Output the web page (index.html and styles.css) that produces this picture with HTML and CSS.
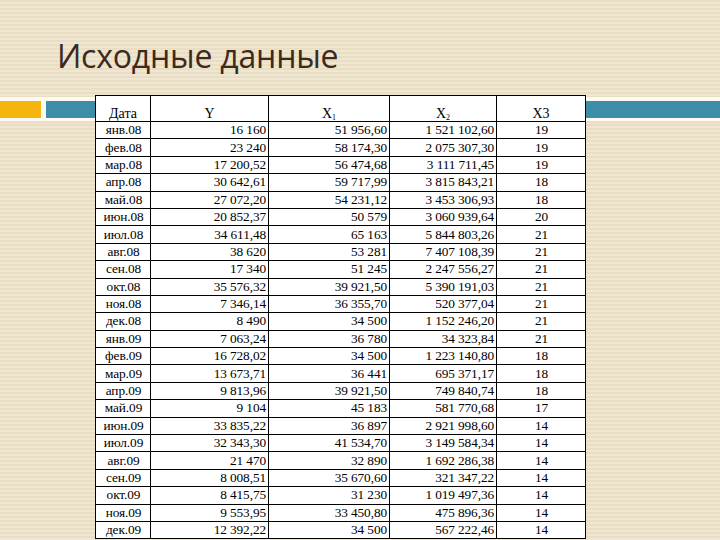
FILE: index.html
```html
<!DOCTYPE html>
<html lang="ru">
<head>
<meta charset="utf-8">
<title>Исходные данные</title>
<link rel="stylesheet" href="styles.css">
</head>
<body>
<header class="head">
  <h1 class="title">Исходные данные</h1>
</header>
<section class="stage">
  <table class="data">
    <colgroup>
      <col class="c-date"><col class="c-y"><col class="c-x1"><col class="c-x2"><col class="c-x3">
    </colgroup>
    <thead>
      <tr><th>Дата</th><th>Y</th><th>X<sub>1</sub></th><th>X<sub>2</sub></th><th>X3</th></tr>
    </thead>
    <tbody>
      <tr><td>янв.08</td><td>16 160</td><td>51 956,60</td><td>1 521 102,60</td><td>19</td></tr>
      <tr><td>фев.08</td><td>23 240</td><td>58 174,30</td><td>2 075 307,30</td><td>19</td></tr>
      <tr><td>мар.08</td><td>17 200,52</td><td>56 474,68</td><td>3 111 711,45</td><td>19</td></tr>
      <tr><td>апр.08</td><td>30 642,61</td><td>59 717,99</td><td>3 815 843,21</td><td>18</td></tr>
      <tr><td>май.08</td><td>27 072,20</td><td>54 231,12</td><td>3 453 306,93</td><td>18</td></tr>
      <tr><td>июн.08</td><td>20 852,37</td><td>50 579</td><td>3 060 939,64</td><td>20</td></tr>
      <tr><td>июл.08</td><td>34 611,48</td><td>65 163</td><td>5 844 803,26</td><td>21</td></tr>
      <tr><td>авг.08</td><td>38 620</td><td>53 281</td><td>7 407 108,39</td><td>21</td></tr>
      <tr><td>сен.08</td><td>17 340</td><td>51 245</td><td>2 247 556,27</td><td>21</td></tr>
      <tr><td>окт.08</td><td>35 576,32</td><td>39 921,50</td><td>5 390 191,03</td><td>21</td></tr>
      <tr><td>ноя.08</td><td>7 346,14</td><td>36 355,70</td><td>520 377,04</td><td>21</td></tr>
      <tr><td>дек.08</td><td>8 490</td><td>34 500</td><td>1 152 246,20</td><td>21</td></tr>
      <tr><td>янв.09</td><td>7 063,24</td><td>36 780</td><td>34 323,84</td><td>21</td></tr>
      <tr><td>фев.09</td><td>16 728,02</td><td>34 500</td><td>1 223 140,80</td><td>18</td></tr>
      <tr><td>мар.09</td><td>13 673,71</td><td>36 441</td><td>695 371,17</td><td>18</td></tr>
      <tr><td>апр.09</td><td>9 813,96</td><td>39 921,50</td><td>749 840,74</td><td>18</td></tr>
      <tr><td>май.09</td><td>9 104</td><td>45 183</td><td>581 770,68</td><td>17</td></tr>
      <tr><td>июн.09</td><td>33 835,22</td><td>36 897</td><td>2 921 998,60</td><td>14</td></tr>
      <tr><td>июл.09</td><td>32 343,30</td><td>41 534,70</td><td>3 149 584,34</td><td>14</td></tr>
      <tr><td>авг.09</td><td>21 470</td><td>32 890</td><td>1 692 286,38</td><td>14</td></tr>
      <tr><td>сен.09</td><td>8 008,51</td><td>35 670,60</td><td>321 347,22</td><td>14</td></tr>
      <tr><td>окт.09</td><td>8 415,75</td><td>31 230</td><td>1 019 497,36</td><td>14</td></tr>
      <tr><td>ноя.09</td><td>9 553,95</td><td>33 450,80</td><td>475 896,36</td><td>14</td></tr>
      <tr><td>дек.09</td><td>12 392,22</td><td>34 500</td><td>567 222,46</td><td>14</td></tr>
    </tbody>
  </table>
</section>
</body>
</html>
```

FILE: styles.css
```css
html {
  overflow: hidden;
}
body {
  margin: 0;
  width: 720px;
  height: 540px;
  background-color: #ebe0c8;
  background-image: repeating-linear-gradient(to bottom, #e9ddc2 0, #e9ddc2 2px, #efe6d3 2px, #efe6d3 4px);
  font-family: "Liberation Serif", serif;
}
.head {
  height: 95px;
  box-sizing: border-box;
  padding: 36px 0 0 57px;
}
.title {
  margin: 0;
  font-family: "Open Sans", "DejaVu Sans", sans-serif;
  font-weight: 400;
  font-size: 32px;
  line-height: 40px;
  letter-spacing: -0.2px;
  color: #3c2a1d;
}
.stage {
  padding-left: 95px;
  background-image:
    linear-gradient(#f5b50f, #f5b50f),
    linear-gradient(#3b8ea6, #3b8ea6),
    linear-gradient(#fdfaf3, #fdfaf3),
    linear-gradient(#f1d9cc, #f1d9cc);
  background-repeat: no-repeat;
  background-position: 0 6px, 46px 6px, 0 2px, 0 26px;
  background-size: 41px 17px, 100% 17px, 100% 24px, 100% 2px;
}
.data {
  border-collapse: collapse;
  table-layout: fixed;
  width: 490px;
  background: #fff;
  font-size: 13.3px;
  color: #000;
}
.c-date { width: 55px; }
.c-y { width: 118px; }
.c-x1 { width: 121px; }
.c-x2 { width: 107px; }
.c-x3 { width: 89px; }
.data th,
.data td {
  border: 1px solid #000;
  padding: 0 3px;
  white-space: nowrap;
  line-height: 14px;
}
.data th {
  height: 25px;
  font-weight: 400;
  font-size: 14px;
  text-align: center;
  vertical-align: bottom;
  padding-bottom: 0;
}
.data th sub {
  font-size: 8px;
  vertical-align: -2px;
  line-height: 0;
}
.data td {
  height: 16.4px;
  text-align: right;
  padding-right: 2px;
  letter-spacing: -0.1px;
}
.data td:first-child,
.data td:last-child {
  text-align: center;
}
```
